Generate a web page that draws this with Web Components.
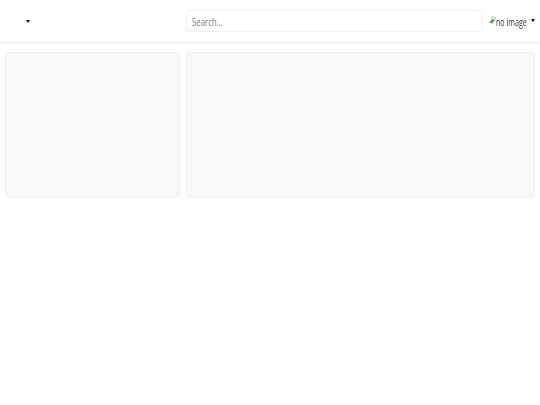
<!DOCTYPE html>
<html>
<head>
<meta charset="utf-8">
<style>
  html, body { margin: 0; background: #fff; }
</style>
</head>
<body>
<app-page>
  <top-bar></top-bar>
  <panel-row></panel-row>
</app-page>
<script>
class AppPage extends HTMLElement {
  constructor() {
    super();
    this.attachShadow({ mode: "open" }).innerHTML = `
      <style>
        :host { display: block; font-family: "Open Sans", sans-serif; }
      </style>
      <slot></slot>`;
  }
}

class DropCaret extends HTMLElement {
  constructor() {
    super();
    this.attachShadow({ mode: "open" }).innerHTML = `
      <style>
        :host { display: block; width: 0; height: 0;
          border-top: 3px solid #111; border-left: 2px solid transparent; border-right: 2px solid transparent; }
      </style>`;
  }
}

// text in the reference is squeezed horizontally, so the label is scaled
class SlimText extends HTMLElement {
  constructor() {
    super();
    this.attachShadow({ mode: "open" }).innerHTML = `
      <style>
        :host { display: block; overflow: visible; white-space: nowrap; }
        span { display: inline-block; transform: scaleX(var(--squeeze, .68)); transform-origin: left center; filter: blur(.2px); }
      </style>
      <span><slot></slot></span>`;
  }
}

class TopBar extends HTMLElement {
  constructor() {
    super();
    this.attachShadow({ mode: "open" }).innerHTML = `
      <style>
        :host { display: grid; grid-template-columns: 175px 1fr 46px; column-gap: 6px; align-items: center;
          height: 42px; padding: 0 5px 0 5px; border-bottom: 1px solid #e9ebed; }
        .brand { display: flex; padding-left: 21px; }
        .search { height: 22px; box-sizing: border-box; border: 1px solid #eef0f2; border-radius: 4px;
          padding: 0 5px; display: flex; align-items: center; font-size: 11.5px; color: #6f767d; }
        .user { display: flex; align-items: center; --squeeze: .62; }
        .user svg { flex: none; margin-top: -2px; }
        .user slim-text { width: 32px; font-size: 11.5px; color: #333; }
        .user drop-caret { margin-left: 3px; margin-top: -2px; flex: none; }
      </style>
      <div class="brand"><drop-caret></drop-caret></div>
      <div class="search"><slim-text>Search...</slim-text></div>
      <div class="user">
        <svg width="7" height="8" viewBox="0 0 7 8">
          <path d="M3.5.5L6.8 1.5 5.8 4.5 2.5 3z" fill="#dfe6e2" stroke="#aeb8b2" stroke-width=".6"/>
          <path d="M.3 6.5L3 3 5.8 4.6 3 7.8z" fill="#58a055"/>
        </svg>
        <slim-text>no image</slim-text>
        <drop-caret></drop-caret>
      </div>`;
  }
}

class PanelRow extends HTMLElement {
  constructor() {
    super();
    this.attachShadow({ mode: "open" }).innerHTML = `
      <style>
        :host { display: grid; grid-template-columns: 175px 349px; column-gap: 6px; padding: 9px 5px 0; }
      </style>
      <info-panel></info-panel>
      <info-panel></info-panel>`;
  }
}

class InfoPanel extends HTMLElement {
  constructor() {
    super();
    this.attachShadow({ mode: "open" }).innerHTML = `
      <style>
        :host { display: block; height: 146px; box-sizing: border-box; background: #f7f8fa;
          border: 1px solid #eef0f2; border-radius: 4px; }
      </style>`;
  }
}

customElements.define("app-page", AppPage);
customElements.define("drop-caret", DropCaret);
customElements.define("slim-text", SlimText);
customElements.define("top-bar", TopBar);
customElements.define("panel-row", PanelRow);
customElements.define("info-panel", InfoPanel);
</script>
</body>
</html>
